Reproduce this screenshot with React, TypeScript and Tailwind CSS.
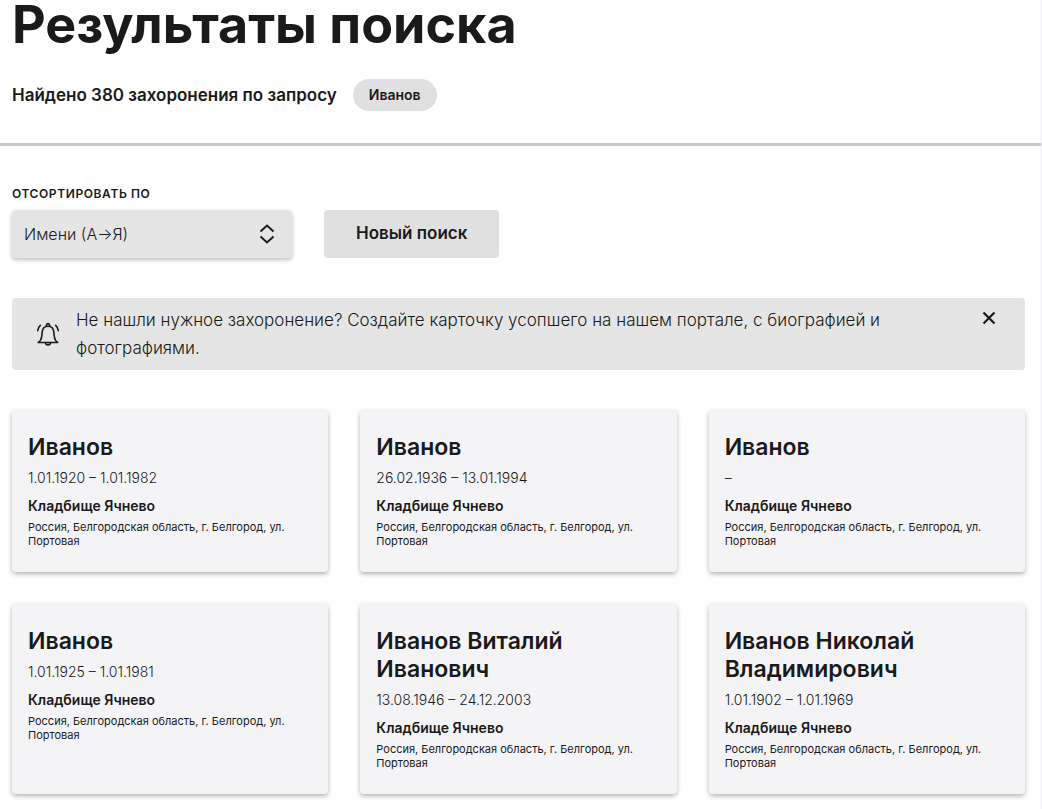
import { useState } from 'react'

interface Burial {
  name: string
  dates: string
  cemetery: string
  address: string
}

const cemetery = 'Кладбище Ячнево'
const address = 'Россия, Белгородская область, г. Белгород, ул. Портовая'

const burials: Burial[] = [
  { name: 'Иванов', dates: '1.01.1920 – 1.01.1982', cemetery, address },
  { name: 'Иванов', dates: '26.02.1936 – 13.01.1994', cemetery, address },
  { name: 'Иванов', dates: '–', cemetery, address },
  { name: 'Иванов', dates: '1.01.1925 – 1.01.1981', cemetery, address },
  { name: 'Иванов Виталий Иванович', dates: '13.08.1946 – 24.12.2003', cemetery, address },
  { name: 'Иванов Николай Владимирович', dates: '1.01.1902 – 1.01.1969', cemetery, address },
]

function BurialCard({ burial }: { burial: Burial }) {
  return (
    <article className="rounded bg-[#f4f4f7] px-4 pb-6 pt-[23px] shadow-[0_2px_5px_rgba(0,0,0,0.3)]">
      <h2 className="text-[23px] font-semibold leading-7">{burial.name}</h2>
      <p className="mt-[7px] text-sm font-light leading-5">{burial.dates}</p>
      <p className="mt-2 text-sm font-semibold leading-5">{burial.cemetery}</p>
      <p className="mt-1 text-[11px] leading-[14px]">{burial.address}</p>
    </article>
  )
}

function BellIcon() {
  return (
    <svg className="size-6 shrink-0" viewBox="0 0 24 24" fill="none" stroke="currentColor" strokeWidth="1.6" strokeLinecap="round" strokeLinejoin="round" aria-hidden="true">
      <path d="M2.300 20.500h19.400c-2-1.300-3.100-3-3.400-6l-.5-4.700c-.4-3.400-2.500-5.600-5.800-5.600s-5.400 2.200-5.800 5.600l-.5 4.700c-.3 3-1.400 4.700-3.400 6z" />
      <path d="M10.300 4.200c-.2-3.400 3.600-3.400 3.400 0M9.500 20.800c.4 2.700 4.600 2.700 5 0" />
      <path d="M4.300 3.400C2.800 4.800 2 6.400 1.700 8.700M19.700 3.400c1.500 1.400 2.300 3 2.600 5.300" />
    </svg>
  )
}

export default function App() {
  const [noticeOpen, setNoticeOpen] = useState(true)

  return (
    <div className="min-h-screen border-r border-[#ececef] bg-white font-['Inter','Noto_Sans',sans-serif] text-[#1a1a1a]">
      <header className="border-b-[3px] border-[#c8c7cc] pb-8 pl-3 pr-4">
        <h1 className="text-[52px] font-bold leading-[50px]">Результаты поиска</h1>
        <div className="mt-[29px] flex items-center gap-4">
          <p className="text-[17px] font-semibold leading-6">Найдено 380 захоронения по запросу</p>
          <span className="rounded-full bg-[#e0e0e0] px-4 text-sm font-semibold leading-8">Иванов</span>
        </div>
      </header>

      <main className="pb-3 pl-3 pr-4 pt-10">
        {/* Sorting */}
        <div className="flex items-end gap-8">
          <div className="w-[280px]">
            <label htmlFor="sort" className="block text-xs font-semibold uppercase leading-4 tracking-wider">
              Отсортировать по
            </label>
            <div className="relative mt-2">
              <select id="sort" className="h-12 w-full appearance-none rounded bg-[#e5e5e5] px-3 text-base font-light shadow-[0_2px_4px_rgba(0,0,0,0.25)]">
                <option>Имени (А→Я)</option>
                <option>Имени (Я→А)</option>
              </select>
              <svg className="pointer-events-none absolute right-4 top-3 h-6 w-5" viewBox="0 0 20 24" fill="none" stroke="currentColor" strokeWidth="2" aria-hidden="true">
                <path d="M4.500 9.500 11 3.500l6.500 6M4.500 14.500l6.500 6 6.500-6" />
              </svg>
            </div>
          </div>
          <button type="button" className="h-12 rounded bg-[#e0e0e0] px-8 text-[17px] font-semibold">
            Новый поиск
          </button>
        </div>

        {/* Notice */}
        {noticeOpen && (
          <div className="mt-10 flex items-center rounded bg-[#e5e5e5] py-2 pl-6 pr-7">
            <BellIcon />
            <p className="ml-4 flex-1 pr-20 text-[17px] font-light leading-7">
              Не нашли нужное захоронение? Создайте карточку усопшего на нашем портале, с биографией и фотографиями.
            </p>
            <button type="button" aria-label="Закрыть" onClick={() => setNoticeOpen(false)} className="mt-1 self-start">
              <svg className="size-4" viewBox="0 0 16 16" fill="none" stroke="currentColor" strokeWidth="2.200" aria-hidden="true">
                <path d="M2.500 2.500l11 11M13.500 2.500l-11 11" />
              </svg>
            </button>
          </div>
        )}

        {/* Results */}
        <section className="mt-10 grid grid-cols-3 gap-8">
          {burials.map((burial, index) => (
            <BurialCard key={index} burial={burial} />
          ))}
        </section>
      </main>
    </div>
  )
}
